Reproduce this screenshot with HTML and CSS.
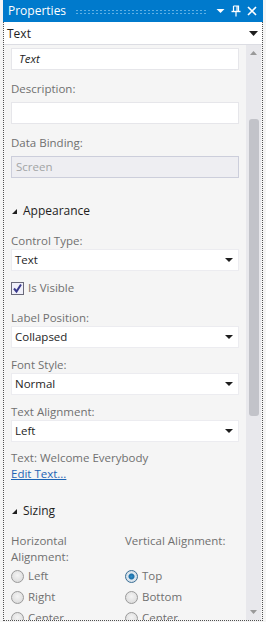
FILE: index.html
```html
<!DOCTYPE html>
<html lang="en">
<head>
  <title>Properties</title>
  <link rel="stylesheet" href="styles.css">
</head>
<body>
  <div class="panel">
    <div class="titlebar">
      <span class="title">Properties</span>
      <span class="grip"></span>
      <svg class="tb-icon" width="9" height="6" viewBox="0 0 9 6"><path d="M0.5 1 L8.5 1 L4.5 5 Z" fill="#fff"/></svg>
      <svg class="tb-icon" width="10" height="12" viewBox="0 0 10 12"><path d="M2.5 1 V6 M2.5 1 H7.5 V6 M6 1 V6" stroke="#fff" stroke-width="1.2" fill="none"/><path d="M0.5 6.5 H9.5" stroke="#fff" stroke-width="1.4"/><path d="M5 7 V11.5" stroke="#fff" stroke-width="1.2"/></svg>
      <svg class="tb-icon" width="10" height="10" viewBox="0 0 10 10"><path d="M1 1 L9 9 M9 1 L1 9" stroke="#fff" stroke-width="1.6"/></svg>
    </div>
    <div class="frame">
      <div class="selector">
        <span>Text</span>
        <svg width="9" height="5" viewBox="0 0 9 5"><path d="M0 0 H9 L4.5 5 Z" fill="#1e1e1e"/></svg>
      </div>
      <div class="body">
        <div class="content">
          <div class="textbox name">Text</div>

          <div class="label gap-11">Description:</div>
          <div class="textbox gap-5"></div>

          <div class="label gap-11">Data Binding:</div>
          <div class="textbox disabled gap-5">Screen</div>

          <div class="section gap-25"><span class="caret"></span>Appearance</div>

          <div class="label gap-14">Control Type:</div>
          <div class="select"><span>Text</span><span class="arrow"></span></div>

          <div class="check gap-9"><span class="box"><svg width="11" height="11" viewBox="0 0 11 11"><path d="M2 5.5 L4.5 8.5 L9 1.5" stroke="#3a3a8c" stroke-width="2" fill="none"/></svg></span>Is Visible</div>

          <div class="label gap-14">Label Position:</div>
          <div class="select"><span>Collapsed</span><span class="arrow"></span></div>

          <div class="label gap-9">Font Style:</div>
          <div class="select"><span>Normal</span><span class="arrow"></span></div>

          <div class="label gap-9">Text Alignment:</div>
          <div class="select"><span>Left</span><span class="arrow"></span></div>

          <div class="label gap-8">Text: Welcome Everybody</div>
          <a class="link" href="#">Edit Text...</a>

          <div class="section gap-21"><span class="caret"></span>Sizing</div>

          <div class="align-grid gap-14">
            <div class="col">
              <div class="label narrow">Horizontal Alignment:</div>
              <div class="radio first"><span class="dot"></span>Left</div>
              <div class="radio"><span class="dot"></span>Right</div>
              <div class="radio"><span class="dot"></span>Center</div>
            </div>
            <div class="col">
              <div class="label">Vertical Alignment:</div>
              <div class="radio first"><span class="dot on"></span>Top</div>
              <div class="radio"><span class="dot"></span>Bottom</div>
              <div class="radio"><span class="dot"></span>Center</div>
            </div>
          </div>
        </div>
        <div class="scrollbar">
          <svg class="sb-arrow" width="7" height="4" viewBox="0 0 7 4"><path d="M0 4 H7 L3.5 0 Z" fill="#999"/></svg>
          <div class="thumb"></div>
          <svg class="sb-arrow down" width="7" height="4" viewBox="0 0 7 4"><path d="M0 0 H7 L3.5 4 Z" fill="#999"/></svg>
        </div>
      </div>
    </div>
  </div>
</body>
</html>
```

FILE: styles.css
```css
html, body {
  margin: 0;
  padding: 0;
  background-color: #f5f5f5;
  overflow: hidden;
}

body {
  font-family: "Open Sans", "Noto Sans", sans-serif;
  font-size: 11.5px;
  color: #1e1e1e;
}

.panel {
  width: 260px;
  height: 622px;
  margin-left: 3px;
  display: flex;
  flex-direction: column;
}

.titlebar {
  height: 22px;
  flex: none;
  background-color: #007acc;
  display: flex;
  align-items: center;
  padding: 0 6px 0 5px;
  gap: 6px;
}

.title {
  color: #fff;
  font-size: 12px;
  margin-top: -1px;
}

.grip {
  flex: 1;
  height: 5px;
  margin: 0 3px;
  background-image: radial-gradient(circle, #5fb0e4 0.7px, transparent 0.9px);
  background-size: 4px 3px;
  background-position: 0 0;
}

.tb-icon {
  display: block;
}

.frame {
  flex: none;
  width: 258px;
  height: 598px;
  display: flex;
  flex-direction: column;
  border: 1px dotted #505050;
  border-top: none;
}

.selector {
  height: 22px;
  flex: none;
  background-color: #fff;
  border-bottom: 1px solid #dcdde3;
  display: flex;
  align-items: center;
  justify-content: space-between;
  padding: 0 4px 0 3px;
  font-size: 12px;
}

.body {
  flex: 1;
  display: flex;
  min-height: 0;
  overflow: hidden;
}

.content {
  flex: 1;
  padding: 3px 7px 0 7px;
  overflow: hidden;
}

.gap-5 { margin-top: 5px; }
.gap-8 { margin-top: 8px; }
.gap-9 { margin-top: 9px; }
.gap-11 { margin-top: 11px; }
.gap-14 { margin-top: 14px; }
.gap-21 { margin-top: 21px; }
.gap-25 { margin-top: 25px; }

.label {
  color: #707070;
  line-height: 16px;
}

.textbox {
  height: 22px;
  box-sizing: border-box;
  background-color: #fff;
  border: 1px solid #e6e6ea;
  padding: 0 4px;
  line-height: 20px;
}

.textbox.name {
  font-style: italic;
  padding-left: 7px;
}

.textbox.disabled {
  background-color: #eeeef2;
  border-color: #cccedb;
  color: #a2a4a5;
}

.select {
  height: 22px;
  box-sizing: border-box;
  background-color: #fff;
  border: 1px solid #ececf0;
  padding: 0 3px 0 3px;
  line-height: 20px;
  display: flex;
  justify-content: space-between;
  align-items: center;
}

.arrow {
  width: 0;
  height: 0;
  border-left: 4px solid transparent;
  border-right: 4px solid transparent;
  border-top: 4px solid #1e1e1e;
  margin-right: 2px;
}

.section {
  line-height: 16px;
  display: flex;
  align-items: center;
  font-size: 12px;
}

.caret {
  width: 0;
  height: 0;
  border-left: 5px solid transparent;
  border-bottom: 5px solid #1e1e1e;
  margin: 0 6px 0 1px;
}

.check {
  display: flex;
  align-items: center;
  line-height: 16px;
  color: #707070;
}

.box {
  width: 13px;
  height: 13px;
  box-sizing: border-box;
  border: 1px solid #6a6a7a;
  background-color: #f0f0fa;
  margin-right: 4px;
  display: flex;
  align-items: center;
  justify-content: center;
}

.link {
  display: block;
  line-height: 16px;
  color: #1e64b4;
  text-decoration: underline;
}

.align-grid {
  display: grid;
  grid-template-columns: 114px 1fr;
}

.label.narrow {
  padding-right: 10px;
}

.radio {
  display: flex;
  align-items: center;
  line-height: 16px;
  color: #707070;
  margin-top: 5px;
}

.col .radio.first {
  margin-top: 3px;
}

.col:last-child .radio.first {
  margin-top: 19px;
}

.dot {
  width: 13px;
  height: 13px;
  box-sizing: border-box;
  border-radius: 50%;
  border: 1px solid #9a9a9a;
  background: radial-gradient(circle at 50% 40%, #f4f4f4, #d6d6d6);
  margin-right: 4px;
}

.dot.on {
  border-color: #3b6f96;
  background: radial-gradient(circle, #2f8ec9 0, #1b6fa8 2.5px, #dfe9f1 3.5px, #cfd9e2 6px);
}

.scrollbar {
  width: 15px;
  flex: none;
  background-color: #e8e8ec;
  display: flex;
  flex-direction: column;
  align-items: center;
  padding-top: 6px;
  margin-right: 1px;
}

.sb-arrow {
  display: block;
}

.thumb {
  width: 10px;
  height: 297px;
  margin-top: 64px;
  background-color: #c2c3c9;
  border-radius: 3px;
}

.sb-arrow.down {
  margin-top: auto;
  margin-bottom: 6px;
}
```
